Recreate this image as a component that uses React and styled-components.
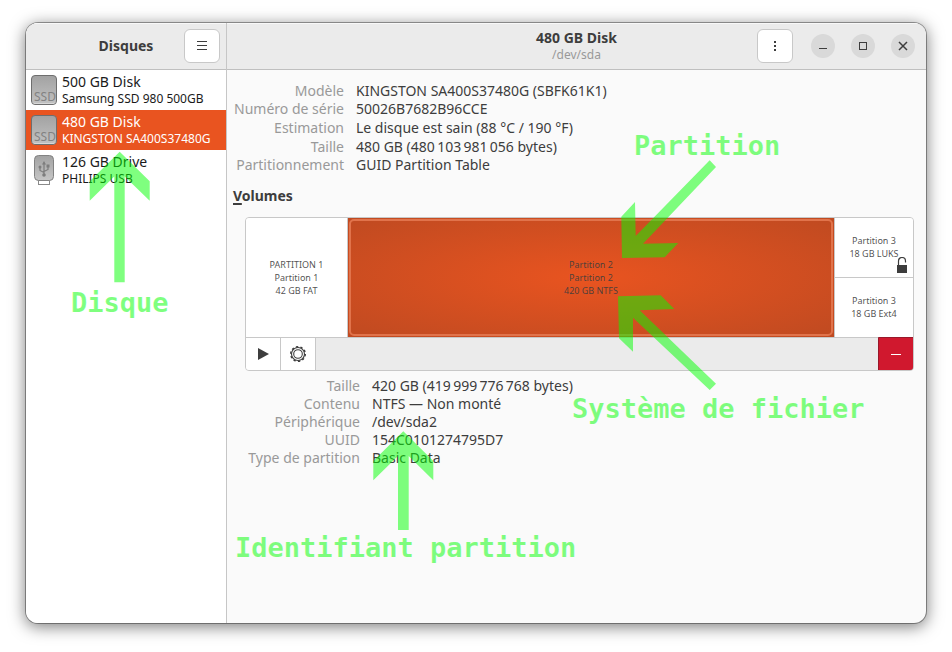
import React, { useState } from "react";
import styled, { createGlobalStyle } from "styled-components";

const disks = [
  { id: "sdb", name: "500 GB Disk", model: "Samsung SSD 980 500GB", kind: "ssd" },
  { id: "sda", name: "480 GB Disk", model: "KINGSTON SA400S37480G", kind: "ssd" },
  { id: "sdc", name: "126 GB Drive", model: "PHILIPS USB", kind: "usb" },
];

const diskInfo = [
  ["Modèle", "KINGSTON SA400S37480G (SBFK61K1)"],
  ["Numéro de série", "50026B7682B96CCE"],
  ["Estimation", "Le disque est sain (88 °C / 190 °F)", true],
  ["Taille", "480 GB (480\u2009103\u2009981\u2009056 bytes)"],
  ["Partitionnement", "GUID Partition Table"],
];

const volumeInfo = [
  ["Taille", "420 GB (419\u2009999\u2009776\u2009768 bytes)"],
  ["Contenu", "NTFS — Non monté"],
  ["Périphérique", "/dev/sda2"],
  ["UUID", "154C0101274795D7"],
  ["Type de partition", "Basic Data"],
];

const callouts = [
  { text: "Disque", x: 71, y: 286 },
  { text: "Partition", x: 634, y: 129 },
  { text: "Système de fichier", x: 572, y: 392 },
  { text: "Identifiant partition", x: 235, y: 531 },
];

const SsdIcon = () => (
  <svg width="26" height="30" viewBox="0 0 26 30" aria-hidden="true">
    <defs>
      <linearGradient id="ssd" x1="0" y1="0" x2="0" y2="1">
        <stop offset="0" stopColor="#a2a2a2" />
        <stop offset="1" stopColor="#c2c2c2" />
      </linearGradient>
    </defs>
    <rect x="0.5" y="0.5" width="25" height="29" rx="3.5" fill="url(#ssd)" stroke="#6e6e6e" />
    <path d="M2 27.5 Q2.5 28.5 4 28.5 H22 Q23.5 28.5 24 27.5" fill="none" stroke="#d8d8d8" />
    <text x="3" y="26" fontFamily="Noto Sans, sans-serif" fontSize="12" fill="#828282">
      SSD
    </text>
  </svg>
);

const UsbIcon = () => (
  <svg width="20" height="30" viewBox="0 0 20 30" aria-hidden="true">
    <defs>
      <linearGradient id="usb" x1="0" y1="0" x2="0" y2="1">
        <stop offset="0" stopColor="#a2a2a2" />
        <stop offset="1" stopColor="#c6c6c6" />
      </linearGradient>
    </defs>
    <rect x="4.5" y="23" width="11" height="6.5" fill="#fff" stroke="#8a8a8a" />
    <rect x="0.5" y="0.5" width="19" height="25" rx="4" fill="url(#usb)" stroke="#828282" />
    <path
      d="M10 9V20M10 17.5L6 15.5V12.5M10 16.5L14 14.5V11.5"
      fill="none"
      stroke="#7d7d7d"
      strokeWidth="1.2"
    />
    <path d="M10 6l2 3.5H8zM12.5 9.5h3v3h-3z" fill="#7d7d7d" />
    <circle cx="6" cy="12" r="1.5" fill="#7d7d7d" />
    <circle cx="10" cy="20" r="1.8" fill="#7d7d7d" />
  </svg>
);

const GearIcon = () => (
  <svg width="18" height="18" viewBox="0 0 18 18" aria-hidden="true">
    <g fill="none" stroke="#3d3d3d">
      <circle cx="9" cy="9" r="7.3" strokeWidth="1.4" strokeDasharray="2.3 2.287" />
      <circle cx="9" cy="9" r="6.5" strokeWidth="1.1" />
      <circle cx="9" cy="9" r="4.3" strokeWidth="1.1" />
    </g>
  </svg>
);

const LockIcon = () => (
  <svg width="10" height="16" viewBox="0 0 10 16" aria-hidden="true">
    <path d="M1.5 8V4a3.5 3.5 0 0 1 7 0v1.5" fill="none" stroke="#3d3d3d" strokeWidth="1.2" />
    <rect y="8" width="10" height="8" fill="#3d3d3d" />
  </svg>
);

const Info = ({ rows, labelWidth }) => (
  <InfoList $labelWidth={labelWidth}>
    {rows.map(([label, value, tall]) => (
      <InfoRow key={label} $tall={tall}>
        <dt>{label}</dt>
        <dd>{value}</dd>
      </InfoRow>
    ))}
  </InfoList>
);

export default function App() {
  const [disk, setDisk] = useState("sda");
  const [partition, setPartition] = useState("p2");

  return (
    <Page>
      <GlobalStyle />
      <Window>
        <Sidebar>
          <SidebarHeader>
            <Title>Disques</Title>
            <MenuButton aria-label="Menu">
              <svg width="12" height="12" viewBox="0 0 12 12" stroke="#3d3d3d">
                <path d="M1 1.5H11M1 5.5H11M1 9.5H11" />
              </svg>
            </MenuButton>
          </SidebarHeader>
          {disks.map((d) => (
            <DiskItem key={d.id} $active={disk === d.id} onClick={() => setDisk(d.id)}>
              <DiskIcon>{d.kind === "ssd" ? <SsdIcon /> : <UsbIcon />}</DiskIcon>
              <DiskText>
                <DiskName>{d.name}</DiskName>
                <DiskModel>{d.model}</DiskModel>
              </DiskText>
            </DiskItem>
          ))}
        </Sidebar>

        <Main>
          <MainHeader>
            <Heading>
              <Title>480 GB Disk</Title>
              <Subtitle>/dev/sda</Subtitle>
            </Heading>
            <HeaderActions>
              <MenuButton aria-label="Options du disque">
                <svg width="12" height="12" viewBox="0 0 12 12" fill="#3d3d3d">
                  <path d="M5 1h2v2H5zM5 5h2v2H5zM5 9h2v2H5z" />
                </svg>
              </MenuButton>
              <WindowControls>
                <RoundButton aria-label="Réduire">
                  <svg width="10" height="10" viewBox="0 0 10 10" stroke="#3d3d3d">
                    <path d="M1 7.5H9" />
                  </svg>
                </RoundButton>
                <RoundButton aria-label="Agrandir">
                  <svg width="10" height="10" viewBox="0 0 10 10" stroke="#3d3d3d" fill="none">
                    <rect x="1.5" y="1.5" width="7" height="7" />
                  </svg>
                </RoundButton>
                <RoundButton aria-label="Fermer">
                  <svg width="10" height="10" viewBox="0 0 10 10" stroke="#3d3d3d" strokeWidth="1.5">
                    <path d="M1 1L9 9M9 1L1 9" />
                  </svg>
                </RoundButton>
              </WindowControls>
            </HeaderActions>
          </MainHeader>

          <Content>
            <Info rows={diskInfo} labelWidth={111} />
            <SectionTitle>
              <u>V</u>olumes
            </SectionTitle>
            <VolumeSection>
              <VolumeBox>
                <VolumeMap>
                  <Partition $active={partition === "p1"} onClick={() => setPartition("p1")}>
                    <span>PARTITION 1</span>
                    <span>Partition 1</span>
                    <span>42 GB FAT</span>
                  </Partition>
                  <Partition $active={partition === "p2"} onClick={() => setPartition("p2")}>
                    <span>Partition 2</span>
                    <span>Partition 2</span>
                    <span>420 GB NTFS</span>
                  </Partition>
                  <PartitionStack>
                    <Partition $active={partition === "p3"} onClick={() => setPartition("p3")}>
                      <span>Partition 3</span>
                      <span>18 GB LUKS</span>
                      <LockBadge>
                        <LockIcon />
                      </LockBadge>
                    </Partition>
                    <Partition $active={partition === "p4"} onClick={() => setPartition("p4")}>
                      <span>Partition 3</span>
                      <span>18 GB Ext4</span>
                    </Partition>
                  </PartitionStack>
                </VolumeMap>
                <VolumeToolbar>
                  <ToolButton aria-label="Monter">
                    <svg width="12" height="12" viewBox="0 0 12 12">
                      <path d="M1 0L12 6L1 12Z" fill="#3d3d3d" />
                    </svg>
                  </ToolButton>
                  <ToolButton aria-label="Options de la partition">
                    <GearIcon />
                  </ToolButton>
                  <DeleteButton aria-label="Supprimer la partition">
                    <svg width="10" height="10" viewBox="0 0 10 10" stroke="#fff">
                      <path d="M0 5.5H10" />
                    </svg>
                  </DeleteButton>
                </VolumeToolbar>
              </VolumeBox>
              <Info rows={volumeInfo} labelWidth={115} />
            </VolumeSection>
          </Content>
        </Main>
      </Window>

      <Arrows width="952" height="652" viewBox="0 0 952 652" aria-hidden="true">
        <path d="M119.7 151.7L149.7 181.3V200.7L124.7 176.5V282.3H114.3V176.5L89.7 200.7V181.3Z" />
        <path d="M403.3 431.3L433.3 460.9V480.3L408.7 456V530H398V456L373.3 480.3V460.9Z" />
        <path d="M622 258L621.3 216.7L635 202L635.7 236L709.7 160.3L716 167L643 243.7L678.3 243L664.7 257.2Z" />
        <path d="M618 296.3L660.7 295.3L674.3 309L639.7 310.3L716 383.7L709.7 390L633 317.7V351.7L619 338.3Z" />
      </Arrows>
      {callouts.map((c) => (
        <Callout key={c.text} $x={c.x} $y={c.y}>
          {c.text}
        </Callout>
      ))}
    </Page>
  );
}

const GlobalStyle = createGlobalStyle`
  * {
    box-sizing: border-box;
  }

  body {
    margin: 0;
    background: #fff;
    color: #3d3d3d;
    font-family: "Noto Sans", sans-serif;
    font-size: 14px;
  }

  button {
    font: inherit;
    color: inherit;
    cursor: pointer;
  }

  svg {
    display: block;
    flex-shrink: 0;
  }
`;

const Page = styled.div`
  position: relative;
  display: flex;
  min-height: 100vh;
  padding: 23px 26px 29px;
`;

const Window = styled.div`
  display: grid;
  grid-template-columns: 201px 1fr;
  flex: 1;
  overflow: hidden;
  background: #fafafa;
  border-radius: 12px;
  box-shadow: 0 0 0 1px rgba(0, 0, 0, 0.35), 0 3px 16px 1px rgba(0, 0, 0, 0.5);
`;

const Sidebar = styled.aside`
  background: #fff;
  border-right: 1px solid #c6c6c6;
`;

const Main = styled.main`
  min-width: 0;
`;

const Header = styled.header`
  display: grid;
  grid-template-columns: 1fr auto 1fr;
  align-items: center;
  height: 47px;
  background: #ebebeb;
  border-bottom: 1px solid #bfbfbf;
  box-shadow: inset 0 1px #f8f8f8;
`;

const SidebarHeader = styled(Header)`
  padding: 0 6px;

  h1 {
    grid-column: 2;
  }

  button {
    justify-self: end;
  }
`;

const MainHeader = styled(Header)`
  padding: 0 11px;
`;

const Heading = styled.div`
  grid-column: 2;
  text-align: center;
`;

const Title = styled.h1`
  margin: 0;
  font-size: 14px;
  font-weight: 700;
  line-height: 18px;
`;

const Subtitle = styled.div`
  color: #999;
  font-size: 12px;
  line-height: 16px;
`;

const HeaderActions = styled.div`
  display: flex;
  align-items: center;
  justify-self: end;
  gap: 18px;
`;

const WindowControls = styled.div`
  display: flex;
  gap: 16px;
`;

const MenuButton = styled.button`
  display: flex;
  align-items: center;
  justify-content: center;
  width: 36px;
  height: 34px;
  padding: 0;
  background: #fff;
  border: 1px solid #c8c8c8;
  border-radius: 6px;
`;

const RoundButton = styled.button`
  display: flex;
  align-items: center;
  justify-content: center;
  width: 24px;
  height: 24px;
  padding: 0;
  background: #d9d9d9;
  border: none;
  border-radius: 50%;
`;

const DiskItem = styled.button`
  display: flex;
  align-items: center;
  gap: 5px;
  width: 100%;
  height: 40px;
  padding: 0 5px;
  border: none;
  text-align: left;
  white-space: nowrap;
  background: ${(props) => (props.$active ? "#e95420" : "#fff")};
  color: ${(props) => (props.$active ? "#fff" : "#1a1a1a")};
`;

const DiskIcon = styled.span`
  display: flex;
  justify-content: center;
  width: 26px;
`;

const DiskText = styled.span`
  display: flex;
  flex-direction: column;
`;

const DiskName = styled.span`
  font-size: 14px;
  line-height: 18px;
`;

const DiskModel = styled.span`
  font-size: 12px;
  line-height: 16px;
`;

const Content = styled.div`
  padding: 12px 12px 12px 6px;
`;

const InfoList = styled.dl`
  margin: 0;
  white-space: nowrap;

  dt {
    display: flex;
    justify-content: flex-end;
    width: ${(props) => props.$labelWidth}px;
    color: #999;
  }

  dd {
    margin: 0;
  }
`;

const InfoRow = styled.div`
  display: flex;
  gap: 12px;
  line-height: ${(props) => (props.$tall ? 20 : 18)}px;
`;

const SectionTitle = styled.h2`
  margin: 13px 0 12px;
  font-size: 14px;
  line-height: 18px;

  u {
    text-decoration-thickness: 2px;
    text-underline-offset: 2px;
  }
`;

const VolumeSection = styled.section`
  padding-left: 12px;
`;

const VolumeBox = styled.div`
  margin-bottom: 6px;
  overflow: hidden;
  background: #ebebeb;
  border: 1px solid #c8c8c8;
  border-radius: 4px;
`;

const VolumeMap = styled.div`
  display: grid;
  grid-template-columns: 102fr 487fr 78fr;
  height: 119px;
`;

const Partition = styled.button`
  position: relative;
  display: flex;
  flex-direction: column;
  align-items: center;
  justify-content: center;
  min-width: 0;
  padding: 0;
  border: none;
  border-right: 1px solid #c8c8c8;
  background: ${(props) =>
    props.$active ? "radial-gradient(ellipse farthest-corner, #e95420, #bf4a21)" : "#fff"};
  color: rgba(61, 61, 61, 0.9);
  font-size: 9px;
  line-height: 13px;
  white-space: nowrap;

  &::after {
    content: "";
    display: ${(props) => (props.$active ? "block" : "none")};
    position: absolute;
    inset: 1px;
    border: 2px solid #e1734b;
    border-radius: 5px;
  }
`;

const PartitionStack = styled.div`
  display: grid;
  grid-template-rows: 60px 59px;

  ${Partition} {
    padding-bottom: 2px;
    border-right: none;
  }

  ${Partition}:first-child {
    border-bottom: 1px solid #c8c8c8;
  }
`;

const LockBadge = styled.i`
  position: absolute;
  right: 6px;
  bottom: 4px;
`;

const VolumeToolbar = styled.div`
  display: flex;
  height: 33px;
  border-top: 1px solid #c8c8c8;
`;

const ToolButton = styled.button`
  display: flex;
  align-items: center;
  justify-content: center;
  width: 35px;
  padding: 0;
  background: #fff;
  border: none;
  border-right: 1px solid #c8c8c8;
`;

const DeleteButton = styled(ToolButton)`
  width: 36px;
  margin: -1px -1px -1px auto;
  background: #d0182e;
  border: 1px solid #98182b;
  border-radius: 0 0 4px 0;
`;

const Arrows = styled.svg`
  position: absolute;
  top: 0;
  left: 0;
  fill: rgba(0, 255, 0, 0.5);
  pointer-events: none;
`;

const Callout = styled.div`
  position: absolute;
  left: ${(props) => props.$x}px;
  top: ${(props) => props.$y}px;
  color: rgba(0, 255, 0, 0.5);
  font-family: "DejaVu Sans Mono", monospace;
  font-size: 27px;
  font-weight: 700;
  line-height: 34px;
  white-space: nowrap;
  pointer-events: none;
`;
